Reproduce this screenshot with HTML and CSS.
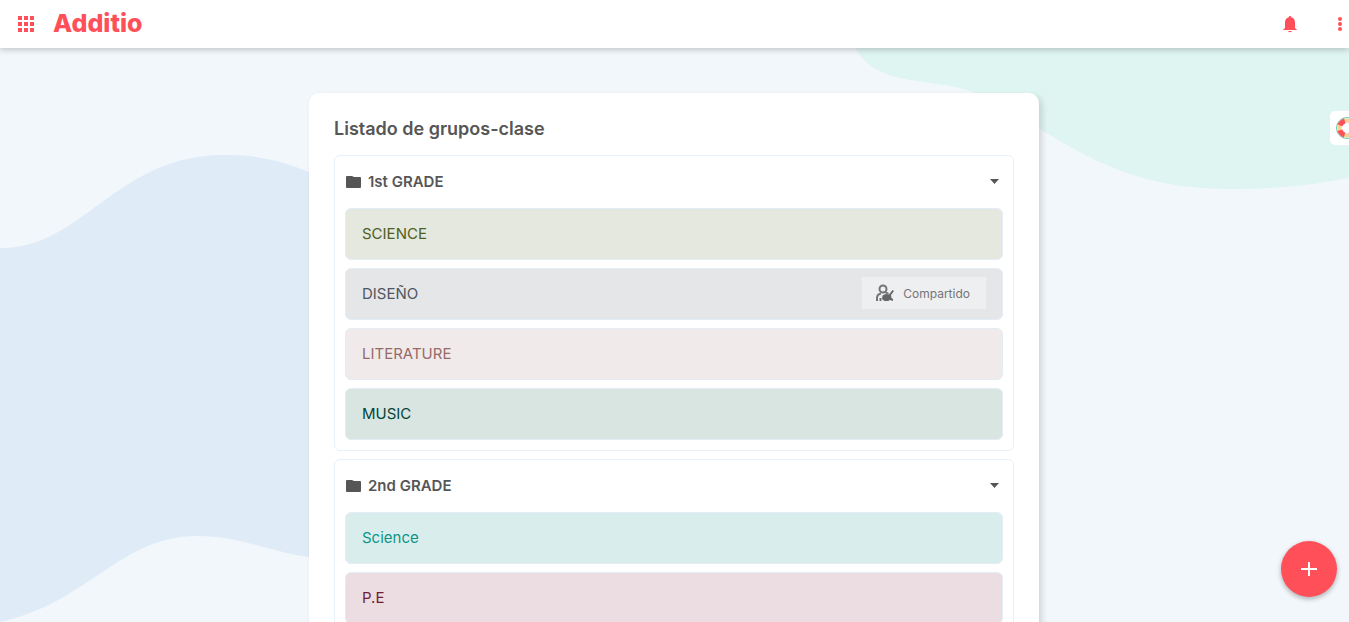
FILE: index.html
```
<!DOCTYPE html>
<html lang="es">
<head>
    <meta charset="UTF-8">
    <meta name="viewport" content="width=device-width, initial-scale=1.0">
    <title>Additio</title>
    <link rel="stylesheet" href="styles.css">
</head>
<body>
    <header class="topbar">
        <button class="icon-btn" aria-label="Aplicaciones">
            <svg width="24" height="24" viewBox="0 0 24 24"><path d="M4 8h4V4H4v4zm6 12h4v-4h-4v4zm-6 0h4v-4H4v4zm0-6h4v-4H4v4zm6 0h4v-4h-4v4zm6-10v4h4V4h-4zm-6 4h4V4h-4v4zm6 6h4v-4h-4v4zm0 6h4v-4h-4v4z"/></svg>
        </button>
        <a class="logo" href="#">Additio</a>
        <div class="topbar-actions">
            <button class="icon-btn" aria-label="Notificaciones">
                <svg width="20" height="20" viewBox="0 0 20 20"><path d="M10 2a1.300 1.300 0 0 1 1.300 1.200C13.900 3.900 15 6 15 8.500V14l1.800 1.500V16H3.200v-.5L5 14V8.500C5 6 6.100 3.900 8.700 3.200A1.300 1.300 0 0 1 10 2zM8 17h4c0 .7-.9 1.200-2 1.200S8 17.700 8 17z"/></svg>
            </button>
            <button class="icon-btn" aria-label="Menú">
                <svg width="18" height="18" viewBox="0 0 18 18"><circle cx="9" cy="4" r="2"/><circle cx="9" cy="9" r="2"/><circle cx="9" cy="14" r="2"/></svg>
            </button>
        </div>
    </header>

    <main class="content">
        <!-- Ondas de fondo -->
        <svg class="wave wave-left" width="700" height="574" viewBox="0 0 700 574" aria-hidden="true">
            <path d="M0 200C60 201 94 151 150 124C185 107 212 107 230 107C260 107 287 115 309 124C420 165 500 230 560 330C520 480 400 515 309 509C270 504 240 488 197 488C120 488 90 554 0 574z"/>
        </svg>
        <svg class="wave wave-right" width="500" height="160" viewBox="0 0 500 160" aria-hidden="true">
            <path d="M6 0C20 24 42 29 68 33C96 37 112 38 136 49C168 60 180 76 201 87C270 130 320 141 384 141C430 141 470 136 500 130V0z"/>
        </svg>

        <section class="card">
            <h1 class="card-title">Listado de grupos-clase</h1>

            <!-- 1st GRADE -->
            <div class="group">
                <button class="group-header">
                    <svg width="15" height="12" viewBox="0 0 15 12"><path d="M1 0h5l2 1h6a1 1 0 0 1 1 1v9a1 1 0 0 1-1 1H1a1 1 0 0 1-1-1V1a1 1 0 0 1 1-1z"/></svg>
                    <span>1st GRADE</span>
                    <svg class="arrow" width="9" height="5" viewBox="0 0 9 5"><path d="M0 0h9L4.500 5z"/></svg>
                </button>
                <div class="group-list">
                    <a class="item olive" href="#">SCIENCE</a>
                    <a class="item gray" href="#">
                        DISEÑO
                        <span class="shared">
                            <svg width="18" height="18" viewBox="0 0 18 18">
                                <circle cx="7" cy="5" r="3.500"/>
                                <path d="M1 17v-3c0-2.500 1.500-4 4-4.500M9.500 8.500c1.500.3 2 .8 3 1.500M4.500 17v-3"/>
                                <path class="fill" d="M16.500 6l1.500 1-3 4 .5 3 1.500 1v2l-3-1-2 1H8.500L6 15l.5-3.500 3-1.500 3.500.5z"/>
                            </svg>
                            Compartido
                        </span>
                    </a>
                    <a class="item rose" href="#">LITERATURE</a>
                    <a class="item green" href="#">MUSIC</a>
                </div>
            </div>

            <!-- 2nd GRADE -->
            <div class="group">
                <button class="group-header">
                    <svg width="15" height="12" viewBox="0 0 15 12"><path d="M1 0h5l2 1h6a1 1 0 0 1 1 1v9a1 1 0 0 1-1 1H1a1 1 0 0 1-1-1V1a1 1 0 0 1 1-1z"/></svg>
                    <span>2nd GRADE</span>
                    <svg class="arrow" width="9" height="5" viewBox="0 0 9 5"><path d="M0 0h9L4.500 5z"/></svg>
                </button>
                <div class="group-list">
                    <a class="item teal" href="#">Science</a>
                    <a class="item wine" href="#">P.E</a>
                </div>
            </div>
        </section>
    </main>

    <button class="help-btn" aria-label="Ayuda">
        <svg width="24" height="24" viewBox="0 0 24 24">
            <circle cx="12" cy="12" r="10.500" fill="none" stroke="#5cc9b5"/>
            <circle cx="12" cy="12" r="7.500" fill="none" stroke="#fdd090" stroke-width="4"/>
            <!-- Franjas rojas en diagonal -->
            <circle cx="12" cy="12" r="7.500" fill="none" stroke="#ff505a" stroke-width="5" stroke-dasharray="6.780 5" stroke-dashoffset="-2.500"/>
        </svg>
    </button>

    <button class="fab" aria-label="Añadir">
        <svg width="16" height="16" viewBox="0 0 16 16"><path d="M7 1h2v6h7v2H9v6H7V9H0V7h7z"/></svg>
    </button>
</body>
</html>
```
FILE: styles.css
```
* {
    box-sizing: border-box;
}

body {
    margin: 0;
    height: 100vh;
    display: flex;
    flex-direction: column;
    overflow: hidden;
    background-color: #f2f7fb;
    color: #565656;
    font-family: Inter, Roboto, sans-serif;
    font-size: 15px;
}

button {
    border: none;
    padding: 0;
    background: none;
    color: inherit;
    font: inherit;
    cursor: pointer;
}

a {
    color: inherit;
    text-decoration: none;
}

svg {
    display: block;
    fill: currentColor;
}

.topbar {
    position: relative;
    z-index: 2;
    flex: none;
    display: flex;
    align-items: center;
    height: 48px;
    padding-left: 14px;
    background-color: white;
    color: #ff505a;
    box-shadow: 0 2px 6px rgba(0, 0, 0, 0.2);
}

.logo {
    margin-left: 15px;
    padding-bottom: 2px;
    font-size: 25px;
    font-weight: 800;
    line-height: 32px;
}

.topbar-actions {
    display: flex;
    align-items: center;
    gap: 31px;
    margin-left: auto;
}

.content {
    position: relative;
    flex: 1;
    min-height: 0;
    padding: 45px 16px 45px 15px;
    overflow-y: auto;
    scrollbar-width: none;
}

.wave {
    position: absolute;
    top: 0;
}

.wave-left {
    left: 0;
    color: #dfebf7;
}

.wave-right {
    right: 0;
    color: #dff5f2;
}

.card {
    position: relative;
    max-width: 730px;
    margin: 0 auto;
    padding: 24px 25px;
    background-color: white;
    border-radius: 10px;
    box-shadow: 3px 3px 6px rgba(0, 0, 0, 0.14);
}

.card-title {
    margin: 0 0 14px;
    font-size: 18px;
    font-weight: 600;
    line-height: 24px;
}

.group {
    margin-bottom: 8px;
    padding: 0 10px 10px;
    border: 1px solid #e8f0f8;
    border-radius: 6px;
}

.group-header {
    display: flex;
    align-items: center;
    gap: 7px;
    width: 100%;
    height: 52px;
    padding: 0 4px 1px 1px;
    font-weight: 600;
}

.arrow {
    margin-left: auto;
}

.group-list {
    display: flex;
    flex-direction: column;
    gap: 8px;
}

.item {
    display: flex;
    align-items: center;
    justify-content: space-between;
    height: 52px;
    padding: 0 16px 2px;
    border: 1px solid #e4edf6;
    border-radius: 6px;
}

.olive {
    background-color: #e4e8de;
    color: #4f5f22;
}

.gray {
    background-color: #e4e6e8;
    color: #50555f;
}

.rose {
    background-color: #f0eaea;
    color: #976a6a;
}

.green {
    background-color: #d8e5e1;
    color: #054439;
}

.teal {
    background-color: #d9eeec;
    color: #0d9488;
}

.wine {
    background-color: #ebdde2;
    color: #741e35;
}

.shared {
    display: flex;
    align-items: center;
    gap: 9px;
    height: 32px;
    padding: 0 16px 0 14px;
    background-color: #eeeff1;
    color: #757575;
    font-size: 12px;
}

.shared svg {
    fill: none;
    stroke: #757575;
    stroke-width: 2;
}

.shared .fill {
    fill: #666;
    stroke: none;
}

.help-btn {
    position: fixed;
    top: 111px;
    right: -15px;
    z-index: 1;
    width: 34px;
    height: 34px;
    padding-left: 5px;
    background-color: white;
    border-radius: 5px;
}

.fab {
    position: fixed;
    right: 12px;
    bottom: 25px;
    z-index: 1;
    display: flex;
    align-items: center;
    justify-content: center;
    width: 56px;
    height: 56px;
    border-radius: 50%;
    background-color: #ff505a;
    color: white;
    box-shadow: 0 2px 5px rgba(0, 0, 0, 0.3);
}
```
